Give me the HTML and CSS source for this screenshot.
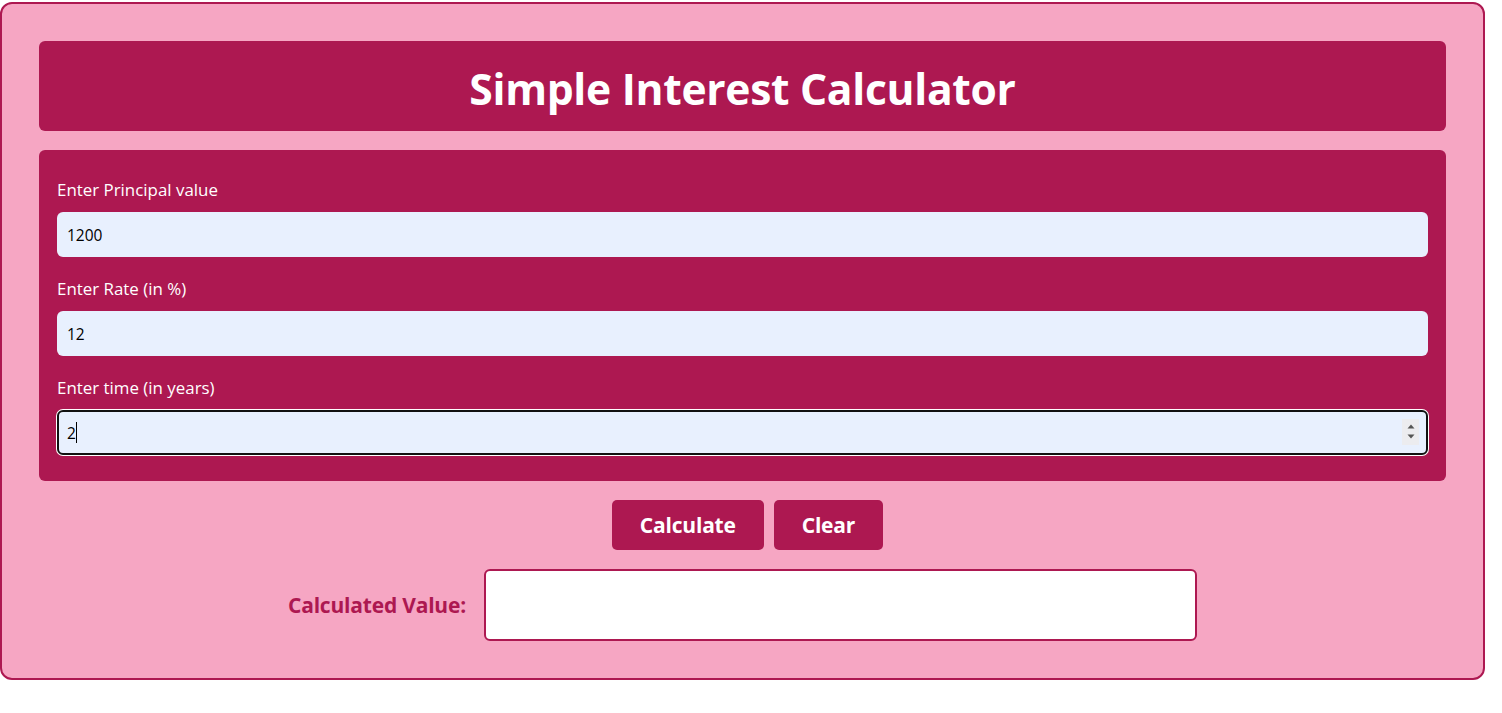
FILE: index.html
```html
<!DOCTYPE html>
<html lang="en">
<head>
<meta charset="utf-8">
<title>Simple Interest Calculator</title>
<link rel="stylesheet" href="styles.css">
</head>
<body>
<main class="calc">
  <header class="calc-header">
    <h1 class="calc-title">Simple Interest Calculator</h1>
  </header>
  <form class="calc-form">
    <div class="field">
      <label class="field-label" for="principal">Enter Principal value</label>
      <div class="field-box">
        <input class="field-input" id="principal" type="text" value="1200">
      </div>
    </div>
    <div class="field">
      <label class="field-label" for="rate">Enter Rate (in %)</label>
      <div class="field-box">
        <input class="field-input" id="rate" type="text" value="12">
      </div>
    </div>
    <div class="field">
      <label class="field-label" for="time">Enter time (in years)</label>
      <div class="field-box">
        <input class="field-input field-input--focused" id="time" type="text" value="2">
        <span class="caret"></span>
        <span class="spinner">
          <svg width="10" height="26" viewBox="0 0 10 26"><path d="M1.5 9.5 L5 5.5 L8.5 9.5 Z" fill="#555"/><path d="M1.5 15.5 L5 19.5 L8.5 15.5 Z" fill="#555"/></svg>
        </span>
      </div>
    </div>
  </form>
  <div class="actions">
    <button class="btn" type="button">Calculate</button>
    <button class="btn" type="button">Clear</button>
  </div>
  <div class="result">
    <span class="result-label">Calculated Value:</span>
    <div class="result-box"></div>
  </div>
</main>
</body>
</html>
```
FILE: styles.css
```css
* { box-sizing: border-box; }
html, body { margin: 0; padding: 0; background: #fff; }
body {
  padding-top: 2px;
  font-family: "Open Sans", "Noto Sans", sans-serif;
}
.calc {
  width: 1485px;
  border: 2px solid #ad1851;
  border-radius: 12px;
  background: #f6a6c3;
  padding: 37px;
  display: flex;
  flex-direction: column;
  gap: 19px;
}
.calc-header {
  height: 90px;
  padding-top: 4px;
  background: #ad1851;
  border-radius: 6px;
  display: flex;
  align-items: center;
  justify-content: center;
}
.calc-title {
  margin: 0;
  color: #fff;
  font-size: 42.6px;
  font-weight: 700;
  letter-spacing: -0.3px;
}
.calc-form {
  margin: 0;
  background: #ad1851;
  border-radius: 6px;
  padding: 30px 18px 26px;
  display: flex;
  flex-direction: column;
  gap: 22px;
}
.field { display: flex; flex-direction: column; gap: 12px; }
.field-label {
  color: #fff;
  font-size: 16.9px;
  line-height: 20px;
}
.field-box { position: relative; }
.field-input {
  display: block;
  width: 100%;
  height: 45px;
  border: 0;
  border-radius: 6px;
  background: #e8f0fe;
  padding: 0 10px;
  font-family: "Open Sans", "Noto Sans", sans-serif;
  font-size: 15.5px;
  color: #000;
  outline: none;
}
.field-input--focused {
  border: 2px solid #111;
  padding: 0 8px;
  box-shadow: 0 0 0 1px #fff;
}
.caret {
  position: absolute;
  left: 19px;
  top: 12px;
  width: 1px;
  height: 21px;
  background: #000;
}
.spinner {
  position: absolute;
  right: 9px;
  top: 9px;
  width: 17px;
  height: 26px;
  background: #ececef;
  display: flex;
  align-items: center;
  justify-content: center;
}
.actions {
  display: flex;
  justify-content: center;
  gap: 10px;
  padding-left: 10px;
}
.btn {
  height: 50px;
  border: 0;
  border-radius: 5px;
  background: #ad1851;
  color: #fff;
  font-family: "Open Sans", "Noto Sans", sans-serif;
  font-size: 21px;
  font-weight: 700;
  padding: 0 28px;
  letter-spacing: -0.2px;
}
.result {
  display: flex;
  justify-content: center;
  align-items: center;
  gap: 18px;
}
.result-label {
  color: #ad1851;
  font-size: 21px;
  font-weight: 700;
  letter-spacing: -0.2px;
}
.result-box {
  width: 713px;
  height: 72px;
  background: #fff;
  border: 2px solid #ad1851;
  border-radius: 6px;
}
```
